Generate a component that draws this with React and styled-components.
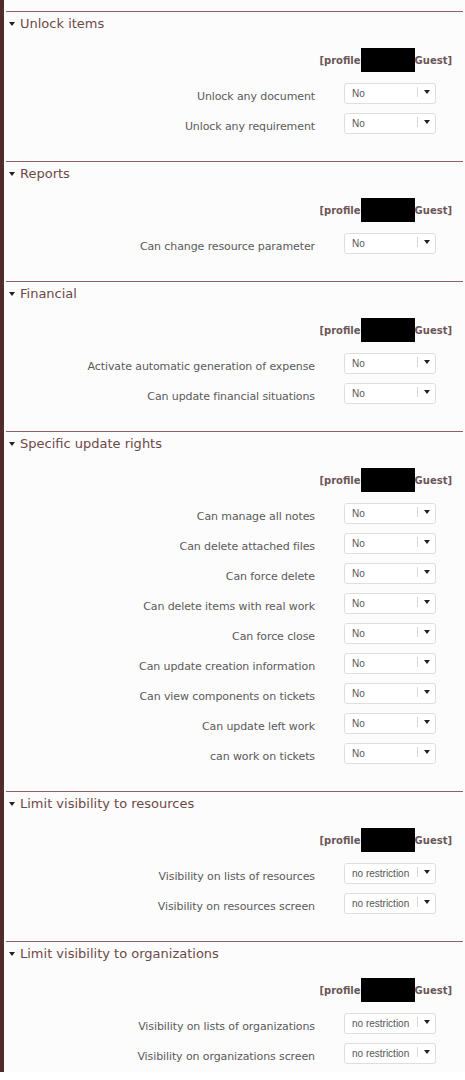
import React from "react"
import styled, { createGlobalStyle } from "styled-components"

const GlobalStyle = createGlobalStyle`
html, body {
    margin:0;
    padding:0;
    background:#ffffff;
}
`

const sections = [
    { title: "Unlock items", rows: [["Unlock any document", "No"], ["Unlock any requirement", "No"]] },
    { title: "Reports", rows: [["Can change resource parameter", "No"]] },
    { title: "Financial", rows: [["Activate automatic generation of expense", "No"], ["Can update financial situations", "No"]] },
    {
        title: "Specific update rights",
        rows: [
            ["Can manage all notes", "No"],
            ["Can delete attached files", "No"],
            ["Can force delete", "No"],
            ["Can delete items with real work", "No"],
            ["Can force close", "No"],
            ["Can update creation information", "No"],
            ["Can view components on tickets", "No"],
            ["Can update left work", "No"],
            ["can work on tickets", "No"],
        ],
    },
    { title: "Limit visibility to resources", rows: [["Visibility on lists of resources", "no restriction"], ["Visibility on resources screen", "no restriction"]] },
    { title: "Limit visibility to organizations", rows: [["Visibility on lists of organizations", "no restriction"], ["Visibility on organizations screen", "no restriction"]] },
]

const Caret = () => (
    <svg width="6" height="4" viewBox="0 0 6 4">
        <path d="M0 0 L6 0 L3 4 Z" fill="#222" />
    </svg>
)

const App = () => {
    return (
        <Page>
            <GlobalStyle />
            <Strip />
            <Content>
                {sections.map(section => (
                    <Section key={section.title}>
                        <Header>
                            <Caret />
                            <Title>{section.title}</Title>
                        </Header>
                        <Profile>
                            [profile<Redacted />Guest]
                        </Profile>
                        {section.rows.map(([label, value]) => (
                            <Row key={label}>
                                <Label>{label}</Label>
                                <Select>
                                    <Value>{value}</Value>
                                    <Arrow>
                                        <Caret />
                                    </Arrow>
                                </Select>
                            </Row>
                        ))}
                    </Section>
                ))}
            </Content>
        </Page>
    )
}

const Page = styled.div`
display:flex;
height:1072px;
background:#fcfcfc;
font-family:"DejaVu Sans", Verdana, sans-serif;
`

const Strip = styled.div`
width:4px;
flex-shrink:0;
background:#4e2c2c;
`

const Content = styled.div`
flex:1;
margin:0 2px;
padding-top:11px;
`

const Section = styled.section`
border-top:1px solid #8e6262;
padding-bottom:20px;
`

const Header = styled.div`
display:flex;
align-items:center;
height:22px;
padding:1px 0 0 3px;
box-sizing:border-box;
gap:5px;
`

const Title = styled.span`
font-size:13px;
color:#6e4848;
`

const Profile = styled.div`
display:flex;
justify-content:flex-end;
align-items:center;
height:24px;
margin:14px 0 9px;
padding-right:11px;
font-size:10px;
font-weight:bold;
color:#6a5656;
`

const Redacted = styled.span`
display:inline-block;
width:54px;
height:24px;
background:#000;
`

const Row = styled.div`
display:flex;
height:30px;
`

const Label = styled.div`
width:309px;
text-align:right;
line-height:32px;
font-size:11px;
letter-spacing:-0.1px;
color:#5a5a5a;
`

const Select = styled.div`
display:flex;
width:92px;
height:21px;
margin:2px 0 0 29px;
border:1px solid #dedede;
border-radius:3px;
background:#fff;
box-sizing:border-box;
`

const Value = styled.div`
flex:1;
padding-left:7px;
font-family:"Liberation Sans", Arial, sans-serif;
font-size:10px;
line-height:19px;
color:#555;
`

const Arrow = styled.div`
display:flex;
align-items:center;
justify-content:center;
width:17px;
margin:3px 0 6px;
border-left:1px solid #d6d6d6;
`

export default App
